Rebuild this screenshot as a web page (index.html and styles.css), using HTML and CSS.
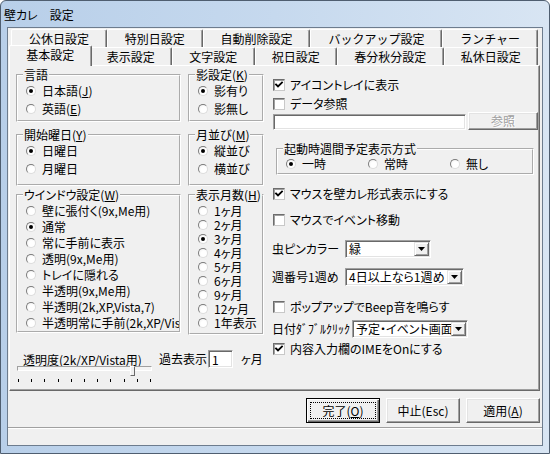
FILE: index.html
```html
<!DOCTYPE html>
<html lang="ja">
<head>
<meta charset="utf-8">
<title>壁カレ 設定</title>
<link rel="stylesheet" href="styles.css">
</head>
<body>
<div class="window">
  <div class="titlebar"><span class="title">壁カレ　設定</span></div>
  <div class="frame">
    <div class="client">
      <div class="tabs">
        <div class="tabrow">
          <div class="tab">公休日設定</div>
          <div class="tab">特別日設定</div>
          <div class="tab">自動削除設定</div>
          <div class="tab">バックアップ設定</div>
          <div class="tab">ランチャー</div>
        </div>
        <div class="tabrow">
          <div class="tab selected">基本設定</div>
          <div class="tab">表示設定</div>
          <div class="tab">文字設定</div>
          <div class="tab">祝日設定</div>
          <div class="tab">春分秋分設定</div>
          <div class="tab">私休日設定</div>
        </div>
      </div>

      <div class="panel">
        <div class="leftpane">
          <fieldset class="group rows18 pb2">
            <legend>言語</legend>
            <div class="radio"><span class="rb on"></span><span class="t">日本語(<u>J</u>)</span></div>
            <div class="radio"><span class="rb"></span><span class="t">英語(<u>E</u>)</span></div>
          </fieldset>
          <fieldset class="group rows18 pb2">
            <legend>影設定(<u>K</u>)</legend>
            <div class="radio"><span class="rb on"></span><span class="t">影有り</span></div>
            <div class="radio"><span class="rb"></span><span class="t">影無し</span></div>
          </fieldset>
          <fieldset class="group rows18 pb6">
            <legend>開始曜日(<u>Y</u>)</legend>
            <div class="radio"><span class="rb on"></span><span class="t">日曜日</span></div>
            <div class="radio"><span class="rb"></span><span class="t">月曜日</span></div>
          </fieldset>
          <fieldset class="group rows18 pb6">
            <legend>月並び(<u>M</u>)</legend>
            <div class="radio"><span class="rb on"></span><span class="t">縦並び</span></div>
            <div class="radio"><span class="rb"></span><span class="t">横並び</span></div>
          </fieldset>
          <fieldset class="group rows16 pt1">
            <legend>ウインドウ設定(<u>W</u>)</legend>
            <div class="radio"><span class="rb"></span><span class="t">壁に張付く(9x,Me用)</span></div>
            <div class="radio"><span class="rb on"></span><span class="t">通常</span></div>
            <div class="radio"><span class="rb"></span><span class="t">常に手前に表示</span></div>
            <div class="radio"><span class="rb"></span><span class="t">透明(9x,Me用)</span></div>
            <div class="radio"><span class="rb"></span><span class="t">トレイに隠れる</span></div>
            <div class="radio"><span class="rb"></span><span class="t">半透明(9x,Me用)</span></div>
            <div class="radio"><span class="rb"></span><span class="t">半透明(2k,XP,Vista,7)</span></div>
            <div class="radio clip"><span class="rb"></span><span class="t">半透明常に手前(2k,XP/Vista)</span></div>
          </fieldset>
          <fieldset class="group rows14 pt2 pb3">
            <legend>表示月数(<u>H</u>)</legend>
            <div class="radio"><span class="rb"></span><span class="t">1ヶ月</span></div>
            <div class="radio"><span class="rb"></span><span class="t">2ヶ月</span></div>
            <div class="radio"><span class="rb on"></span><span class="t">3ヶ月</span></div>
            <div class="radio"><span class="rb"></span><span class="t">4ヶ月</span></div>
            <div class="radio"><span class="rb"></span><span class="t">5ヶ月</span></div>
            <div class="radio"><span class="rb"></span><span class="t">6ヶ月</span></div>
            <div class="radio"><span class="rb"></span><span class="t">9ヶ月</span></div>
            <div class="radio"><span class="rb"></span><span class="t">12ヶ月</span></div>
            <div class="radio"><span class="rb"></span><span class="t">1年表示</span></div>
          </fieldset>

          <div class="bottomrow">
            <div class="sliderblock">
              <div class="sliderlabel">透明度(2k/XP/Vista用)</div>
              <div class="slider">
                <div class="track"></div>
                <div class="thumb"></div>
                <div class="ticks"><i></i><i></i><i></i><i></i><i></i><i></i><i></i><i></i><i></i><i></i><i></i></div>
              </div>
            </div>
            <div class="past">
              <span>過去表示</span>
              <span class="edit months">1</span>
              <span class="unit">ヶ月</span>
            </div>
          </div>
        </div>

        <div class="rightpane">
          <div class="check r1"><span class="cb"><svg viewBox="0 0 10 10"><path d="M2 4.5 L4 6.5 L8 2.5"/></svg></span><span class="t">アイコントレイに表示</span></div>
          <div class="check r2"><span class="cb"></span><span class="t">データ参照</span></div>
          <div class="pathrow">
            <span class="edit path"></span>
            <span class="btn ref disabled">参照</span>
          </div>
          <fieldset class="group startup">
            <legend>起動時週間予定表示方式</legend>
            <div class="hradios">
              <div class="radio"><span class="rb on"></span><span class="t">一時</span></div>
              <div class="radio"><span class="rb"></span><span class="t">常時</span></div>
              <div class="radio"><span class="rb"></span><span class="t">無し</span></div>
            </div>
          </fieldset>
          <div class="check r5"><span class="cb"><svg viewBox="0 0 10 10"><path d="M2 4.5 L4 6.5 L8 2.5"/></svg></span><span class="t">マウスを壁カレ形式表示にする</span></div>
          <div class="check r6"><span class="cb"></span><span class="t">マウスでイベント移動</span></div>
          <div class="selrow r7">
            <span class="sellabel short">虫ピンカラー</span>
            <span class="select s-color"><span class="val">緑</span><span class="arrow"><svg viewBox="0 0 7 4"><path d="M0 0H7L3.5 4Z"/></svg></span></span>
          </div>
          <div class="selrow r8">
            <span class="sellabel short">週番号1週め</span>
            <span class="select s-week"><span class="val">4日以上なら1週め</span><span class="arrow"><svg viewBox="0 0 7 4"><path d="M0 0H7L3.5 4Z"/></svg></span></span>
          </div>
          <div class="check r9"><span class="cb"></span><span class="t">ポップアップでBeep音を鳴らす</span></div>
          <div class="selrow r10">
            <span class="sellabel long">日付ﾀﾞﾌﾞﾙｸﾘｯｸ</span>
            <span class="select s-dbl"><span class="val">予定・イベント画面</span><span class="arrow"><svg viewBox="0 0 7 4"><path d="M0 0H7L3.5 4Z"/></svg></span></span>
          </div>
          <div class="check r11"><span class="cb"><svg viewBox="0 0 10 10"><path d="M2 4.5 L4 6.5 L8 2.5"/></svg></span><span class="t">内容入力欄のIMEをOnにする</span></div>
        </div>
      </div>

      <div class="buttonbar">
        <div class="btn default"><span class="focus"><span class="t">完了(<u>O</u>)</span></span></div>
        <div class="btn"><span class="t">中止(Esc)</span></div>
        <div class="btn"><span class="t">適用(<u>A</u>)</span></div>
      </div>
      <div class="status"></div>
    </div>
  </div>
</div>
</body>
</html>
```

FILE: styles.css
```css
* { box-sizing: border-box; }
html, body { margin: 0; padding: 0; }
body {
  width: 550px;
  height: 454px;
  overflow: hidden;
  background: #ffffff;
  font-family: "Noto Sans CJK JP", "Noto Sans", sans-serif;
  font-size: 12px;
  line-height: 14px;
  color: #000;
  font-feature-settings: "palt";
}
u { text-decoration: underline; text-underline-offset: 1px; }
.t { white-space: nowrap; }

.window {
  width: 550px;
  height: 454px;
  border: 1px solid #4f5e70;
  border-radius: 6px 6px 0 0;
  background: linear-gradient(to right, #b8cfe9 0%, #c6d9ee 50%, #d8e5f3 100%);
  display: flex;
  flex-direction: column;
}
.titlebar {
  height: 26px;
  flex: none;
  display: flex;
  align-items: center;
  padding: 2px 0 0 3px;
}
.title { font-size: 12px; }
.frame {
  flex: 1;
  display: flex;
  padding: 0 7px 7px 6px;
}
.client {
  flex: 1;
  display: flex;
  flex-direction: column;
  background: #f0f0f0;
  border: 1px solid #6d7c8e;
}

/* tabs */
.tabs { flex: none; margin: 1px 2px 0 1px; }
.tabrow { display: flex; height: 18px; padding: 0 2px; }
.tab {
  flex: 1 1 auto;
  padding: 2px 6px 0;
  line-height: 14px;
  text-align: center;
  white-space: nowrap;
  font-feature-settings: normal;
  background: #f0f0f0;
  border-left: 1px solid #fff;
  border-top: 1px solid #fff;
  border-right: 1px solid #696969;
  border-radius: 2px 2px 0 0;
  box-shadow: inset -1px 0 0 #a0a0a0;
}
.tab.selected {
  position: relative;
  z-index: 1;
  height: 21px;
  margin: -2px -2px -1px;
  padding-top: 2px;
}

.panel {
  flex: none;
  height: 326px;
  margin: 0 2px 0 1px;
  border: 1px solid;
  border-color: #fff #696969 #696969 #fff;
  box-shadow: inset -1px -1px 0 #a0a0a0;
  display: flex;
  padding: 2px 0 0 6px;
}

/* group boxes */
.group {
  margin: 0;
  padding: 0;
  min-width: 0;
  border: 2px groove #fff;
}
.group legend {
  margin-left: 5px;
  padding: 0 1px;
  line-height: 14px;
  white-space: nowrap;
}
.group .radio { padding-left: 8px; }
.rows18 .radio { height: 18px; }
.rows16 .radio { height: 16px; }
.rows14 .radio { height: 14px; }
.pt1 { padding-top: 1px; }
.pt2 { padding-top: 2px; }
.pb2 { padding-bottom: 2px; }
.pb3 { padding-bottom: 3px; }
.pb6 { padding-bottom: 6px; }

.radio {
  display: flex;
  align-items: center;
  gap: 6px;
  line-height: 14px;
}
.radio.clip { overflow: hidden; }
.rb {
  flex: none;
  position: relative;
  width: 10px;
  height: 10px;
  border-radius: 50%;
  border: 1px solid;
  border-color: #7c7c7c #dcdcdc #dcdcdc #7c7c7c;
  background: radial-gradient(circle at 60% 60%, #ffffff 40%, #ececec 100%);
}
.rb.on::after {
  content: "";
  position: absolute;
  left: 2px;
  top: 2px;
  width: 4px;
  height: 4px;
  border-radius: 50%;
  background: #000;
}

.leftpane {
  flex: none;
  width: 248px;
  display: grid;
  grid-template-columns: 165px 76px;
  grid-template-rows: 60px 60px auto auto;
  column-gap: 7px;
  align-items: start;
}

.bottomrow {
  grid-column: 1 / -1;
  display: flex;
  align-items: flex-start;
  margin-top: 7px;
}
.sliderblock { width: 143px; padding-top: 3px; }
.sliderlabel { padding-left: 7px; line-height: 13px; white-space: nowrap; }
.slider { position: relative; width: 135px; margin-left: 1px; }
.track {
  height: 5px;
  border: 1px solid;
  border-color: #a0a0a0 #fff #fff #a0a0a0;
  background: #f4f4f4;
}
.thumb {
  position: absolute;
  left: 113px;
  top: 0;
  width: 5px;
  height: 10px;
  background: #f0f0f0;
  border: 1px solid;
  border-color: #fff #696969 #696969 #fff;
}
.ticks {
  display: flex;
  justify-content: space-between;
  margin-top: 8px;
  padding: 0 1px;
  height: 3px;
}
.ticks i { width: 1px; height: 3px; background: #000; }

.past { display: flex; align-items: center; height: 18px; white-space: nowrap; }
.edit {
  display: block;
  background: #fff;
  border: 1px solid;
  border-color: #a0a0a0 #fff #fff #a0a0a0;
  box-shadow: inset 1px 1px 0 #696969, inset -1px -1px 0 #e3e3e3;
}
.months { width: 25px; height: 18px; margin-left: 1px; padding: 1px 0 0 3px; line-height: 15px; }
.unit { margin-left: 8px; }

/* right column */
.rightpane {
  flex: 1;
  margin-left: 8px;
  display: flex;
  flex-direction: column;
}
.check {
  display: flex;
  align-items: center;
  gap: 5px;
  height: 16px;
  padding-left: 1px;
  line-height: 14px;
}
.cb {
  flex: none;
  width: 12px;
  height: 12px;
  background: #fff;
  border: 1px solid;
  border-color: #6d6d6d #c8c8c8 #c8c8c8 #6d6d6d;
  box-shadow: inset 1px 1px 0 #a0a0a0;
  display: flex;
}
.cb svg { width: 10px; height: 10px; }
.cb path { fill: none; stroke: #000; stroke-width: 1.8; stroke-linecap: square; }

.r1 { margin-top: 9px; }
.r2 { margin-top: 3px; }
.r5 { margin-top: 11px; }
.r6 { margin-top: 10px; }
.r7 { margin-top: 12px; }
.r8 { margin-top: 10px; }
.r9 { margin-top: 13px; }
.r10 { margin-top: 5px; }
.r11 { margin-top: 3px; }

.pathrow { display: flex; align-items: flex-end; height: 18px; }
.path { width: 193px; height: 16px; margin-left: 1px; }

.btn {
  display: flex;
  align-items: center;
  justify-content: center;
  background: #f0f0f0;
  border: 1px solid;
  border-color: #fff #696969 #696969 #fff;
  box-shadow: inset -1px -1px 0 #a0a0a0, inset 1px 1px 0 #e3e3e3;
  white-space: nowrap;
}
.ref { width: 70px; height: 18px; margin-left: 2px; }
.disabled { color: #a0a0a0; text-shadow: 1px 1px 0 #fff; }

.startup { margin: 12px 5px 0 4px; padding: 1px 0 2px; }
.hradios { display: flex; padding-left: 8px; }
.hradios .radio { width: 82px; height: 14px; padding-left: 0; }

.selrow { display: flex; align-items: center; height: 18px; white-space: nowrap; }
.sellabel.short { width: 73px; }
.sellabel.long { width: 80px; }
.select {
  display: flex;
  height: 18px;
  background: #fff;
  border: 1px solid;
  border-color: #a0a0a0 #fff #fff #a0a0a0;
  box-shadow: inset 1px 1px 0 #696969, inset -1px -1px 0 #e3e3e3;
  padding: 1px;
}
.s-color { width: 86px; }
.s-week { width: 119px; }
.s-dbl { width: 116px; }
.select .val { flex: 1; min-width: 0; padding-left: 2px; line-height: 14px; white-space: nowrap; }
.select .arrow {
  flex: none;
  width: 15px;
  display: flex;
  align-items: center;
  justify-content: center;
  background: #f0f0f0;
  border: 1px solid;
  border-color: #e3e3e3 #696969 #696969 #e3e3e3;
  box-shadow: inset 1px 1px 0 #fff, inset -1px -1px 0 #a0a0a0;
}
.select .arrow svg { width: 7px; height: 4px; }
.select .arrow path { fill: #000; }

/* bottom buttons */
.buttonbar {
  flex: none;
  height: 36px;
  display: flex;
  justify-content: flex-end;
  align-items: flex-start;
  gap: 6px;
  padding: 7px 2px 0 0;
}
.buttonbar .btn { width: 74px; height: 25px; }
.btn.default {
  border: 1px solid #000;
  box-shadow: inset 1px 1px 0 #fff, inset -1px -1px 0 #696969, inset -2px -2px 0 #a0a0a0;
  padding: 3px;
  align-items: stretch;
}
.focus {
  flex: 1;
  display: flex;
  align-items: center;
  justify-content: center;
  border: 1px dotted #000;
}
.status {
  flex: 1;
  border-top: 1px solid #a0a0a0;
  box-shadow: inset 0 1px 0 #fff;
}
```
